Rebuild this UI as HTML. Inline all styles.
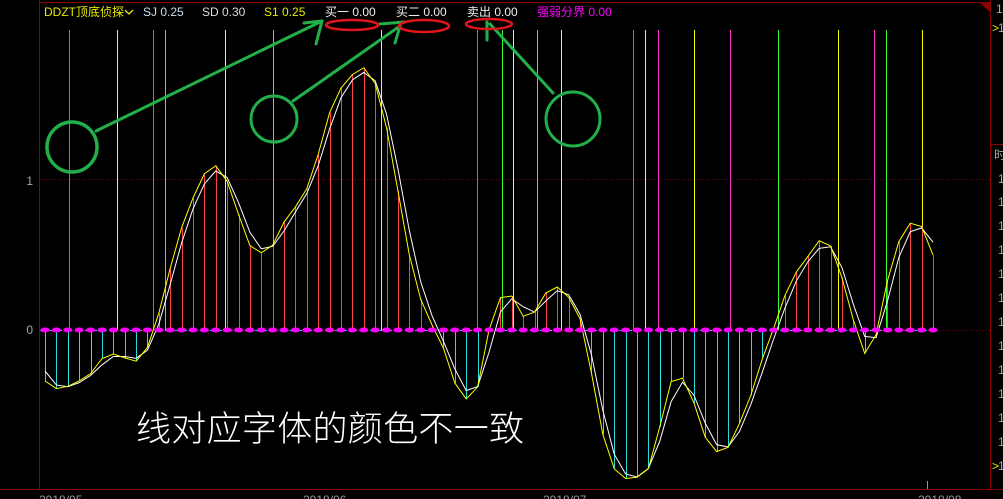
<!DOCTYPE html>
<html><head><meta charset="utf-8"><style>
html,body{margin:0;padding:0;background:#000;width:1003px;height:499px;overflow:hidden}
svg{display:block}
text{font-family:"Liberation Sans","Noto Sans CJK SC",sans-serif}
</style></head><body>
<svg id="s" width="1003" height="499" xmlns="http://www.w3.org/2000/svg">
<rect width="1003" height="499" fill="#000"/>
<g stroke="#8b0000" stroke-width="1" fill="none">
<line x1="39.5" y1="0" x2="39.5" y2="489.5"/>
<line x1="39" y1="2.5" x2="990" y2="2.5"/>
<line x1="990.5" y1="0" x2="990.5" y2="490"/>
<line x1="0" y1="489.5" x2="1003" y2="489.5"/>
<line x1="990" y1="144.5" x2="1003" y2="144.5"/>
<line x1="40" y1="179.5" x2="990" y2="179.5" stroke-dasharray="1,2"/>
<line x1="40" y1="330.5" x2="990" y2="330.5" stroke-dasharray="1,2"/>
</g>
<polygon points="980,3 990,3 990,12" fill="#8b0000"/>
<g id="tall"></g>
<g id="stems"></g>
<g id="curves"></g>
<g id="marks"></g>
<text x="33" y="185" fill="#aaa" font-size="12" text-anchor="end">1</text>
<text x="33" y="334" fill="#aaa" font-size="12" text-anchor="end">0</text>
<g font-size="12">
<text x="44" y="16" fill="#e8e800">DDZT顶底侦探</text>
<path d="M125 10 l4 4 l4 -4" stroke="#e8e800" stroke-width="1.3" fill="none"/>
<text x="143" y="16" fill="#cde">SJ 0.25</text>
<text x="202" y="16" fill="#ddd">SD 0.30</text>
<text x="264" y="16" fill="#e8e800">S1 0.25</text>
<text x="325" y="16" fill="#eee">买一 0.00</text>
<text x="396" y="16" fill="#eee">买二 0.00</text>
<text x="467" y="16" fill="#eee">卖出 0.00</text>
<text x="537" y="16" fill="#ff00ff">强弱分界 0.00</text>
</g>
<g font-size="12" fill="#aaa">
<text x="996" y="13">1</text><text x="992" y="32" fill="#e8e800">&gt;</text><text x="998" y="32">1</text>
<text x="994" y="159">时</text>
<text x="998" y="183">1</text><text x="998" y="206">1</text><text x="998" y="230">1</text><text x="998" y="254">1</text>
<text x="998" y="278">1</text><text x="998" y="302">1</text><text x="998" y="326">1</text><text x="998" y="350">1</text>
<text x="998" y="374">1</text><text x="998" y="398">1</text><text x="998" y="422">1</text><text x="998" y="446">1</text>
<text x="992" y="470" fill="#e8e800">&gt;</text><text x="998" y="470">1</text>
</g>
<g font-size="12" fill="#999">
<text x="39" y="504">2018/05</text><text x="303" y="504">2018/06</text>
<text x="543" y="504">2018/07</text><text x="918" y="504">2018/08</text>
</g>
<line x1="927.5" y1="481" x2="927.5" y2="489" stroke="#999"/>
<text x="136" y="441" fill="#fff" font-size="35" letter-spacing="0.3" style="font-family:'Noto Sans CJK SC',sans-serif;font-weight:300">线对应字体的颜色不一致</text>
<g stroke="#22b04a" stroke-width="3" fill="none" stroke-linecap="round">
<circle cx="72" cy="147" r="25" stroke-width="3.5"/>
<circle cx="274" cy="119" r="23"/>
<circle cx="573" cy="119" r="27"/>
<line x1="96" y1="131" x2="322" y2="21"/>
<line x1="322" y1="21" x2="316" y2="44"/><line x1="322" y1="21" x2="304" y2="23"/>
<line x1="293" y1="101" x2="400" y2="26"/>
<line x1="400" y1="26" x2="395" y2="43"/><line x1="380" y1="24" x2="405" y2="22"/>
<line x1="553" y1="93" x2="490" y2="24"/>
<line x1="487" y1="22" x2="487" y2="40"/>
</g>
<g stroke="#e0151b" stroke-width="2.5" fill="none">
<ellipse cx="352" cy="25" rx="26" ry="5"/>
<ellipse cx="424" cy="26" rx="25" ry="6"/>
<ellipse cx="489" cy="24" rx="23" ry="5"/>
</g>
</svg>
<script>
var NS="http://www.w3.org/2000/svg";
function el(p,t,a){var e=document.createElementNS(NS,t);for(var k in a)e.setAttribute(k,a[k]);document.getElementById(p).appendChild(e);}
var tall=[[69,"#ff33cc"],[117,"#ffff00"],[153,"#ff33cc"],[165,"#33ff33"],[225,"#ffff00"],[273,"#33ff33"],[381,"#ffff00"],[477,"#ff33cc"],[502,"#33ff33"],[513,"#ffff00"],[537,"#33ff33"],[561,"#ffff00"],[633,"#ff33cc"],[645,"#ffff00"],[658,"#ff33cc"],[694,"#ffff00"],[730,"#ff33cc"],[778,"#33ff33"],[838,"#ffff00"],[874,"#ff33cc"],[886,"#33ff33"],[922,"#ffff00"]];
tall.forEach(function(t){el("tall","line",{x1:t[0]+.5,y1:30,x2:t[0]+.5,y2:330,stroke:t[1],"stroke-width":1});});
var K=[[45,381],[57,389],[69,386],[81,380],[93,372],[105,354],[117,354],[129,360],[141,362],[153,335],[165,290],[177,240],[189,208],[201,178],[213,163],[225,175],[237,210],[249,245],[261,253],[273,245],[285,220],[297,205],[309,185],[321,145],[333,100],[345,82],[357,70],[369,66],[381,100],[393,160],[405,235],[417,290],[429,320],[441,340],[453,380],[465,400],[477,390],[489,330],[501,296],[513,296],[525,320],[537,310],[549,287],[561,287],[573,303],[585,330],[597,410],[609,460],[621,480],[633,476],[645,480],[657,440],[669,383],[681,375],[693,400],[705,437],[717,452],[729,447],[741,420],[753,390],[765,350],[777,320],[789,283],[801,265],[813,250],[825,232],[837,262],[849,300],[861,355],[873,350],[885,290],[897,245],[909,223],[921,225],[933,255]];
function f(x){for(var i=0;i<K.length-1;i++){if(x<=K[i+1][0]){var a=K[i],b=K[i+1];return a[1]+(b[1]-a[1])*(x-a[0])/(b[0]-a[0]);}}return K[K.length-1][1];}
var N=78,xs=[],ys=[];for(var i=0;i<=N;i++){var x=45+(933-45)*i/N;xs.push(x);ys.push(f(x));}
var ws=[];for(var i=0;i<=N;i++){var a=ys[Math.max(0,i-1)],b=ys[i],c=ys[Math.min(N,i+1)];ws.push((a*0.45+b*0.45+c*0.1));}
ws[0]=371;
for(var i=0;i<=N;i++){var y=ys[i];var x=Math.round(xs[i])+.5;el("stems","line",{x1:x,y1:330,x2:x,y2:y,stroke:y<330?"#ff4444":"#22dddd","stroke-width":1});}
el("curves","polyline",{points:xs.map(function(x,i){return x+","+ws[i]}).join(" "),fill:"none",stroke:"#fff","stroke-width":1});
el("curves","polyline",{points:xs.map(function(x,i){return x+","+ys[i]}).join(" "),fill:"none",stroke:"#ffff00","stroke-width":1});
el("marks","line",{x1:40,y1:330.5,x2:938,y2:330.5,stroke:"#22dddd","stroke-width":1,"stroke-dasharray":"2,3"});
for(var i=0;i<=N;i++){el("marks","ellipse",{cx:xs[i],cy:330,rx:4.5,ry:2.5,fill:"#ff00ff"});}
</script>
</body></html>
